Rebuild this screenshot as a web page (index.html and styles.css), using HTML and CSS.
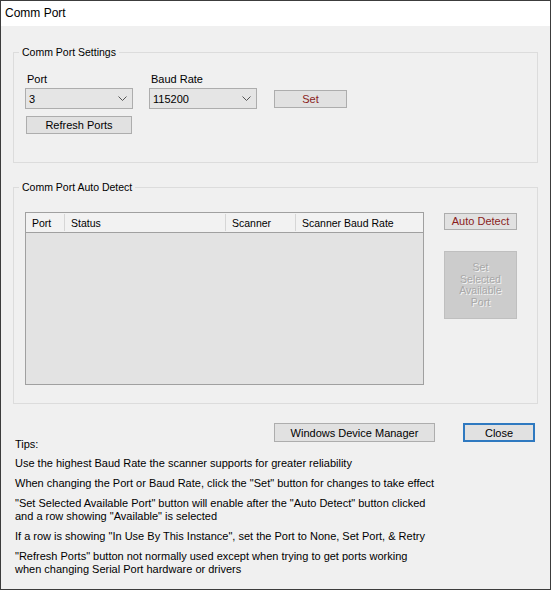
FILE: index.html
```html
<!DOCTYPE html>
<html>
<head>
<meta charset="utf-8">
<title>Comm Port</title>
<link rel="stylesheet" href="styles.css">
</head>
<body>
<div class="window">
  <div class="titlebar">Comm Port</div>
  <div class="group group-settings">
    <div class="group-title">Comm Port Settings</div>
    <div class="settings-row">
      <div class="field field-port">
        <div class="label">Port</div>
        <div class="combo"><span>3</span><svg class="chev" width="9" height="5" viewBox="0 0 9 5"><path d="M0.5 0.5 L4.5 4.5 L8.5 0.5" fill="none" stroke="#555" stroke-width="1"/></svg></div>
        <button class="btn btn-refresh">Refresh Ports</button>
      </div>
      <div class="field field-baud">
        <div class="label">Baud Rate</div>
        <div class="combo"><span>115200</span><svg class="chev" width="9" height="5" viewBox="0 0 9 5"><path d="M0.5 0.5 L4.5 4.5 L8.5 0.5" fill="none" stroke="#555" stroke-width="1"/></svg></div>
      </div>
      <button class="btn btn-set red">Set</button>
    </div>
  </div>
  <div class="group group-detect">
    <div class="group-title">Comm Port Auto Detect</div>
    <div class="detect-row">
      <div class="table">
        <div class="thead">
          <div class="th">Port</div>
          <div class="th">Status</div>
          <div class="th">Scanner</div>
          <div class="th last">Scanner Baud Rate</div>
        </div>
      </div>
      <div class="side">
        <button class="btn btn-auto red">Auto Detect</button>
        <button class="btn btn-disabled" disabled>Set<br>Selected<br>Available<br>Port</button>
      </div>
    </div>
  </div>
  <div class="bottom-row">
    <div class="tips-label">Tips:</div>
    <button class="btn btn-wdm">Windows Device Manager</button>
    <button class="btn btn-close">Close</button>
  </div>
  <div class="tips">
    <p>Use the highest Baud Rate the scanner supports for greater reliability</p>
    <p>When changing the Port or Baud Rate, click the "Set" button for changes to take effect</p>
    <p>"Set Selected Available Port" button will enable after the "Auto Detect" button clicked<br>and a row showing "Available" is selected</p>
    <p>If a row is showing "In Use By This Instance", set the Port to None, Set Port, &amp; Retry</p>
    <p>"Refresh Ports" button not normally used except when trying to get ports working<br>when changing Serial Port hardware or drivers</p>
  </div>
</div>
</body>
</html>
```
FILE: styles.css
```css
html, body {
  margin: 0;
  padding: 0;
  background: #3a3a3a;
}
body {
  font-family: "Liberation Sans", Arial, sans-serif;
  font-size: 11px;
  color: #000;
}
.window {
  width: 551px;
  height: 590px;
  box-sizing: border-box;
  border: 1px solid #3c3c3c;
  background: #f0f0f0;
  overflow: hidden;
}
.titlebar {
  height: 25px;
  line-height: 25px;
  background: #fff;
  padding-left: 4px;
  font-size: 12px;
}
.group {
  position: relative;
  margin: 0 12px;
  border: 1px solid #dcdcdc;
  box-sizing: border-box;
}
.group-title {
  position: absolute;
  top: -8px;
  left: 5px;
  line-height: 14px;
  padding: 0 3px;
  background: #f0f0f0;
  font-size: 10.5px;
}
.group-settings {
  margin-top: 26px;
  height: 111px;
  padding: 19px 0 0 11px;
}
.settings-row {
  display: flex;
  align-items: flex-start;
}
.field {
  width: 108px;
  display: flex;
  flex-direction: column;
}
.field-baud {
  margin-left: 16px;
}
.label {
  line-height: 14px;
  margin-bottom: 2px;
  padding-left: 2px;
}
.combo {
  height: 21px;
  box-sizing: border-box;
  border: 1px solid #adadad;
  background: #e5e5e5;
  display: flex;
  align-items: center;
  justify-content: space-between;
  padding: 0 4px 0 3px;
}
.combo span {
  line-height: 14px;
}
.chev {
  display: block;
  margin-right: 1px;
}
.btn {
  font-family: inherit;
  font-size: 11px;
  color: #000;
  background: #e1e1e1;
  border: 1px solid #adadad;
  box-sizing: border-box;
  padding: 0;
  margin: 0;
  line-height: 14px;
}
.red {
  color: #8a1c1c;
}
.btn-refresh {
  margin: 7px 0 0 1px;
  width: 106px;
  height: 18px;
}
.btn-set {
  margin: 18px 0 0 17px;
  width: 73px;
  height: 18px;
}
.group-detect {
  margin-top: 24px;
  height: 217px;
  padding: 24px 0 0 11px;
}
.detect-row {
  display: flex;
  align-items: flex-start;
}
.table {
  width: 399px;
  height: 173px;
  box-sizing: border-box;
  border: 1px solid #a0a0a0;
  background: #e3e3e3;
}
.thead {
  display: grid;
  grid-template-columns: 39px 161px 70px 1fr;
  height: 20px;
  box-sizing: border-box;
  background: #f2f2f2;
  border-bottom: 1px solid #a0a0a0;
  font-size: 10.5px;
}
.th {
  margin-top: 1px;
  height: 17px;
  box-sizing: border-box;
  padding: 3px 0 0 6px;
  line-height: 13px;
  border-right: 1px solid #d6d6d6;
}
.th.last {
  border-right: none;
}
.side {
  margin-left: 20px;
  width: 73px;
  display: flex;
  flex-direction: column;
}
.btn-auto {
  margin-top: 1px;
  width: 73px;
  height: 17px;
  line-height: 13px;
}
.btn-disabled {
  margin-top: 21px;
  width: 73px;
  height: 68px;
  background: #cccccc;
  border-color: #bfbfbf;
  color: #a8a8a8;
  font-size: 10.5px;
  line-height: 11.5px;
  text-shadow: 1px 1px 0 #f4f4f4;
}
.bottom-row {
  display: flex;
  align-items: flex-start;
  margin-top: 19px;
  padding-left: 14px;
  padding-right: 15px;
}
.tips-label {
  flex: 1;
  margin-top: 15px;
  line-height: 13px;
}
.btn-wdm {
  width: 161px;
  height: 19px;
}
.btn-close {
  margin-left: 28px;
  width: 72px;
  height: 19px;
  border: 2px solid #2f79c0;
}
.tips {
  margin-top: 6px;
  padding-left: 14px;
}
.tips p {
  margin: 0 0 7px;
  line-height: 13px;
  white-space: nowrap;
}
```
